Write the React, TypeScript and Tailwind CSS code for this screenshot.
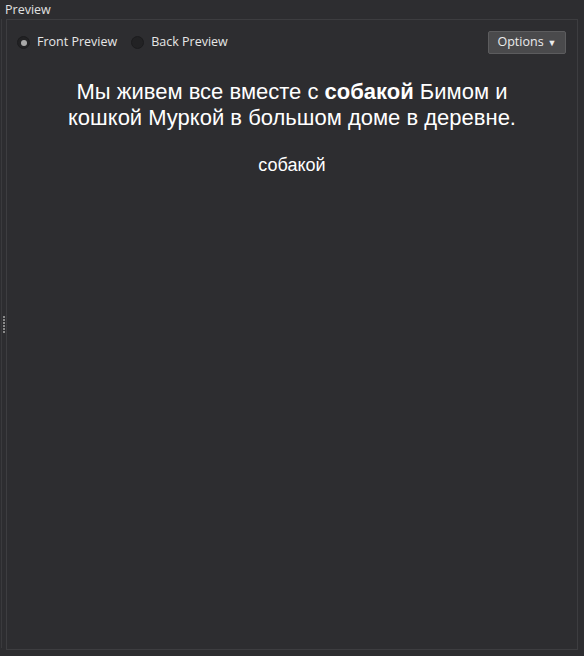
import React from "react";

const Radio = ({ checked, label }: { checked: boolean; label: string }) => {
  return (
    <label className="flex items-center gap-[7px]">
      <span className="w-[13px] h-[13px] rounded-full bg-[#222224] border border-[#1c1c1e] flex items-center justify-center">
        {checked && <span className="w-[6px] h-[6px] rounded-full bg-[#a8a8a8]" />}
      </span>
      <span>{label}</span>
    </label>
  );
};

const App = () => {
  return (
    <div
      className="w-[584px] h-[656px] bg-[#2d2d30] text-[#e6e6e6] flex flex-col overflow-hidden"
      style={{ fontFamily: '"Open Sans", "Noto Sans", sans-serif' }}
    >
      <div className="h-[19px] px-[5px] text-[12.5px] leading-[19px] text-[#e0e0e0]">Preview</div>
      <div className="flex h-[631px]">
        {/* dock edge with grip */}
        <div className="w-[6px] flex">
          <div className="w-[1px] ml-[1px] bg-[#3a3a3d] h-[629px]" />
          <div className="flex flex-col justify-center gap-[1px] ml-[1px] mb-[20px]">
            {[0, 1, 2, 3, 4, 5].map((i) => (
              <span key={i} className="w-[2px] h-[2px] bg-[#8a8a8a]" />
            ))}
          </div>
        </div>
        <div className="w-[572px] h-[631px] border border-[#3d3d40] flex flex-col">
          <div className="flex items-center justify-between pl-[10px] pr-[11px] pt-[11px] text-[12.5px]">
            <div className="flex items-center gap-[14px]">
              <Radio checked label="Front Preview" />
              <Radio checked={false} label="Back Preview" />
            </div>
            <button className="h-[23px] w-[78px] rounded-[2px] bg-[#4a4a4c] border border-[#5c5c5e] text-[12.5px] text-[#ececec] flex items-center justify-center gap-[4px]">
              Options <span className="text-[9px]">▼</span>
            </button>
          </div>
          <div
            className="flex flex-col items-center text-center text-white mt-[25px]"
            style={{ fontFamily: '"Liberation Sans", Arial, sans-serif' }}
          >
            <p className="text-[22px] leading-[26px]">
              Мы живем все вместе с <b>собакой</b> Бимом и
              <br />
              кошкой Муркой в большом доме в деревне.
            </p>
            <p className="text-[18px] leading-[22px] mt-[23px]">собакой</p>
          </div>
        </div>
      </div>
    </div>
  );
};

export default App;
